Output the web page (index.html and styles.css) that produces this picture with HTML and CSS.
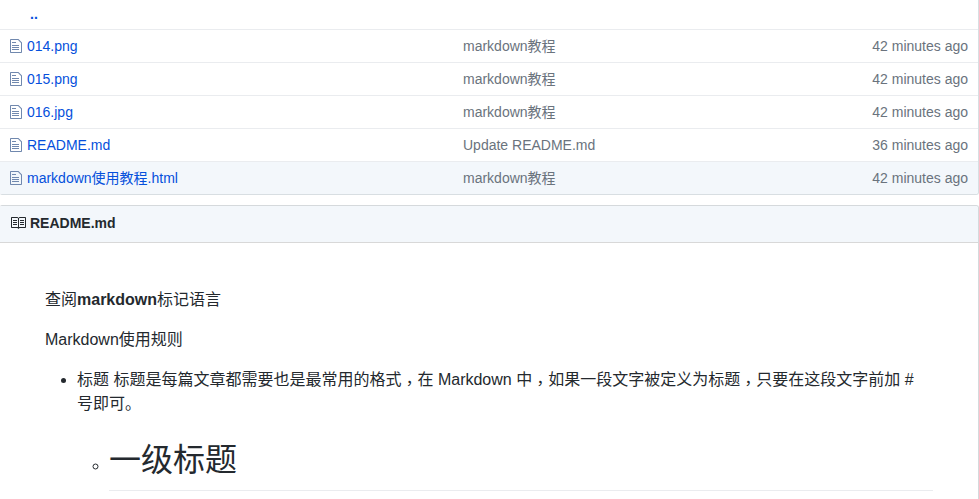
FILE: index.html
```html
<!DOCTYPE html>
<html lang="zh-CN">
<head>
<meta charset="utf-8">
<title>README.md</title>
<link rel="stylesheet" href="styles.css">
</head>
<body>
<svg class="sprite" aria-hidden="true">
  <symbol id="file" viewBox="0 0 12 16"><path fill-rule="evenodd" d="M6 5H2V4h4v1zM2 8h7V7H2v1zm0 2h7V9H2v1zm0 2h7v-1H2v1zm10-7.500V14c0 .550-.450 1-1 1H1c-.550 0-1-.450-1-1V2c0-.550.450-1 1-1h7.500L12 4.500zM11 5L8 2H1v12h10V5z"/></symbol>
  <symbol id="book" viewBox="0 0 16 16"><path fill-rule="evenodd" d="M3 5h4v1H3V5zm0 3h4V7H3v1zm0 2h4V9H3v1zm11-5h-4v1h4V5zm0 2h-4v1h4V7zm0 2h-4v1h4V9zm2-6v9c0 .550-.450 1-1 1H9.500l-1 1-1-1H2c-.550 0-1-.450-1-1V3c0-.550.450-1 1-1h5.500l1 1 1-1H15c.550 0 1 .450 1 1zm-8 .500L7.500 3H2v9h6V3.500zm7-.500H9.500l-.500.500V12h6V3z"/></symbol>
</svg>
<main class="page">
  <section class="files">
    <div class="row up"><a class="parent">..</a></div>
    <div class="row"><svg class="icon"><use href="#file"/></svg><a class="name">014.png</a><span class="message">markdown教程</span><time>42 minutes ago</time></div>
    <div class="row"><svg class="icon"><use href="#file"/></svg><a class="name">015.png</a><span class="message">markdown教程</span><time>42 minutes ago</time></div>
    <div class="row"><svg class="icon"><use href="#file"/></svg><a class="name">016.jpg</a><span class="message">markdown教程</span><time>42 minutes ago</time></div>
    <div class="row"><svg class="icon"><use href="#file"/></svg><a class="name">README.md</a><span class="message">Update README.md</span><time>36 minutes ago</time></div>
    <div class="row active"><svg class="icon"><use href="#file"/></svg><a class="name">markdown使用教程.html</a><span class="message">markdown教程</span><time>42 minutes ago</time></div>
  </section>
  <section class="readme">
    <h3 class="readme-title"><svg class="book"><use href="#book"/></svg>README.md</h3>
    <article class="markdown">
      <p>查阅<strong>markdown</strong>标记语言</p>
      <p>Markdown使用规则</p>
      <ul>
        <li>标题 标题是每篇文章都需要也是最常用的格式<span class="comma" lang="zh-TW">，</span>在 Markdown 中<span class="comma" lang="zh-TW">，</span>如果一段文字被定义为标题<span class="comma" lang="zh-TW">，</span>只要在这段文字前加 #<br>号即可。
          <ul><li><h1>一级标题</h1></li></ul>
        </li>
      </ul>
    </article>
  </section>
</main>
</body>
</html>
```
FILE: styles.css
```css
* { box-sizing: border-box; }
html { overflow: hidden; }
body {
  margin: 0;
  height: 499px;
  overflow: hidden;
  background: #fff;
  color: #24292e;
  font: 14px/20px "Liberation Sans", "Noto Sans CJK SC", sans-serif;
}
.sprite { display: none; }
.page { width: 979px; }
.files {
  overflow: hidden;
  border: solid #d8dee2;
  border-width: 0 1px 1px 0;
  border-radius: 0 0 3px 2px;
}
.row {
  display: grid;
  grid-template-columns: 27px 436px 1fr auto;
  align-items: center;
  height: 33px;
  padding-right: 10px;
  border-top: 1px solid #eaecef;
  color: #6a737d;
}
.up { height: 29px; border-top: 0; }
.parent { grid-column: 1 / 3; padding: 0 0 2px 30px; color: #0550dc; font-weight: bold; }
.active { background: #f3f7fb; }
.icon { width: 12px; height: 16px; margin-left: 10px; fill: #7088ae; }
.name { color: #0550dc; }
.readme {
  margin-top: 10px;
  overflow: hidden;
  border: solid #d5d9dc;
  border-width: 1px 1px 0 0;
  border-radius: 2px 3px 0 0;
}
.readme-title {
  display: flex;
  align-items: center;
  gap: 4px;
  height: 37px;
  margin: 0;
  padding: 0 10px 2px;
  border-bottom: 1px solid #d8d8d8;
  background: #f3f7fb;
  font-size: 14px;
}
.book { width: 16px; height: 16px; fill: #24292e; }
.markdown { padding: 45px 45px 0; font-size: 16px; line-height: 24px; }
.markdown p { margin: 0 0 16px; }
.markdown ul { margin: 0; padding-left: 32px; }
.comma { font-family: "Noto Sans CJK TC", sans-serif; line-height: 0; vertical-align: -4px; }
.markdown h1 {
  margin: 24px 0 16px;
  padding-bottom: 10px;
  border-bottom: 1px solid #eaecef;
  font-size: 32px;
  font-weight: normal;
  line-height: 40px;
}
```
